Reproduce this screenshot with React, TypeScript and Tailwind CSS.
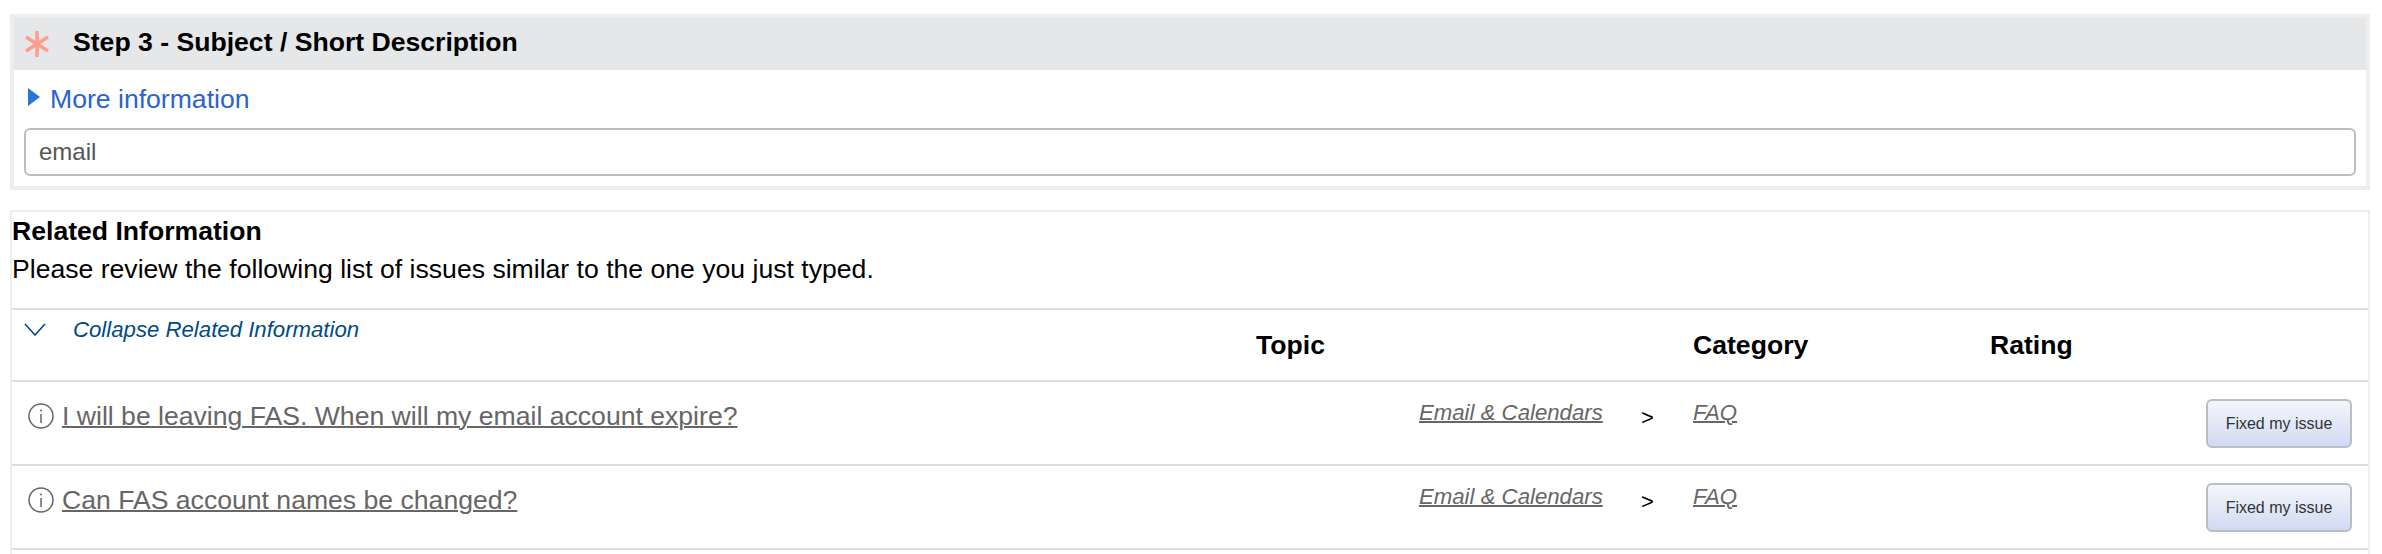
const font = "font-['Liberation_Sans',Arial,sans-serif]";

const issues = ["I will be leaving FAS. When will my email account expire?", "Can FAS account names be changed?"];

function InfoIcon() {
  return (
    <svg width="26" height="26" viewBox="0 0 26 26" fill="none" stroke="#666" className="shrink-0">
      <circle cx="13" cy="13" r="12" strokeWidth="1.5" />
      <path d="M13 11v9" strokeWidth="1.5" />
      <circle cx="13" cy="7.5" r="1" fill="#666" stroke="none" />
    </svg>
  );
}

function IssueRow({ title }: { title: string }) {
  return (
    <div className="grid grid-cols-[1407px_222px_52px_1fr] h-[84px] border-b-2 border-[#dddddd]">
      <div className="flex items-start pl-[16px] pt-[21px] gap-[8px]">
        <InfoIcon />
        <a href="#" className="-mt-[2px] text-[26.6px] leading-[30px] text-[#666666] underline decoration-2 underline-offset-[1px]">{title}</a>
      </div>
      <a href="#" className="pt-[18px] text-[22.2px] leading-[26px] italic text-[#666666] underline decoration-2 underline-offset-[1px] justify-self-start">Email &amp; Calendars</a>
      <span className="pt-[23px] text-[22px] leading-[26px] text-black">&gt;</span>
      <div className="flex justify-between pr-[16px]">
        <a href="#" className="pt-[18px] text-[22.2px] leading-[26px] italic text-[#666666] underline decoration-2 underline-offset-[1px]">FAQ</a>
        <button className="mt-[17px] w-[146px] h-[49px] rounded-[6px] border-2 border-[#bbbdc2] bg-gradient-to-b from-[#f5f6fb] to-[#cfdaf2] text-[16px] text-[#333333]">Fixed my issue</button>
      </div>
    </div>
  );
}

export default function App() {
  return (
    <div className={`${font} h-[554px] overflow-hidden bg-white pl-[10px] pr-[12px] pt-[14px] text-black`}>
      <section className="border-4 border-[#eeeeee]">
        <div className="flex items-center h-[52px] bg-[#e6e7e9] pl-[10px] gap-[23px]">
          <svg width="26" height="28" viewBox="0 0 26 28" stroke="#ff9c8f" strokeWidth="3.5" className="shrink-0">
            <path d="M13 1v26M2 7l22 14M24 7L2 21" />
          </svg>
          <h2 className="text-[26.6px] font-bold -mt-[2px]">Step 3 - Subject / Short Description</h2>
        </div>
        <div className="flex items-center h-[58px] pl-[14px] gap-[10px]">
          <svg width="12" height="18" viewBox="0 0 12 18" className="shrink-0 -mt-[4px]">
            <path d="M0 0l12 9-12 9z" fill="#2a74d8" />
          </svg>
          <a href="#" className="mt-[2px] text-[26.6px] text-[#2a63cf]">More information</a>
        </div>
        <div className="px-[10px] pb-[10px]">
          <input
            readOnly
            value="email"
            className="block w-full h-[48px] rounded-[6px] border-2 border-[#bbbfc3] px-[13px] text-[24px] text-[#555555] outline-none"
          />
        </div>
      </section>

      <section className="mt-[20px] h-[400px] border-x-2 border-t-2 border-[#eeeeee]">
        <div className="h-[98px] border-b-2 border-[#dddddd] pt-[1px]">
          <h3 className="text-[26.6px] leading-[36px] font-bold">Related Information</h3>
          <p className="text-[26.6px] leading-[40px]">Please review the following list of issues similar to the one you just typed.</p>
        </div>
        <div className="grid grid-cols-[1244px_437px_297px_1fr] h-[72px] border-b-2 border-[#dddddd]">
          <div className="flex items-start pl-[12px] pt-[6px] gap-[27px]">
            <svg width="22" height="13" viewBox="0 0 22 13" fill="none" stroke="#004b87" strokeWidth="1.6" className="shrink-0 mt-[7px]">
              <path d="M1 1l10 11 10-11" />
            </svg>
            <a href="#" className="text-[22.2px] leading-[28px] italic text-[#004b87]">Collapse Related Information</a>
          </div>
          <span className="pt-[20px] text-[26.6px] leading-[30px] font-bold">Topic</span>
          <span className="pt-[20px] text-[26.6px] leading-[30px] font-bold">Category</span>
          <span className="pt-[20px] text-[26.6px] leading-[30px] font-bold">Rating</span>
        </div>
        {issues.map((title) => (
          <IssueRow key={title} title={title} />
        ))}
      </section>
    </div>
  );
}
